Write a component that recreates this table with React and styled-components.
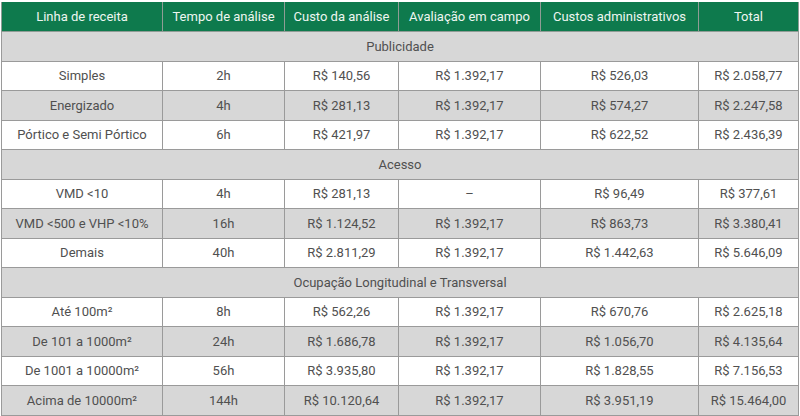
import React from "react";
import styled, { createGlobalStyle } from "styled-components";

const Global = createGlobalStyle`
  html, body { margin: 0; padding: 0; background: #fff; }
  body { font-family: Roboto, "Liberation Sans", sans-serif; }
`;

const Wrap = styled.div`
  padding: 2px 2px 0 1px;
`;

const Table = styled.table`
  border-collapse: collapse;
  table-layout: fixed;
  width: 797px;
  font-size: 13px;
  color: #505050;
`;

const Th = styled.th`
  background: #0e7a4d;
  color: #eef6f1;
  font-weight: 400;
  height: 29px;
  padding: 0;
  border: 1px solid #8f9c95;
  border-top: none;
  text-align: center;
`;

const Td = styled.td`
  height: 28.5px;
  padding: 0;
  text-align: center;
  border: 1px solid #9a9a9a;
  background: ${(p) => (p.$shade ? "#d7d7d7" : "#ffffff")};
`;

const SectionTd = styled.td`
  height: 28.5px;
  padding: 0;
  text-align: center;
  border: 1px solid #9a9a9a;
  background: #d7d7d7;
`;

const cols = [161, 122, 114, 142, 158, 100];
const heads = [
  "Linha de receita",
  "Tempo de análise",
  "Custo da análise",
  "Avaliação em campo",
  "Custos administrativos",
  "Total",
];

const sections = [
  {
    title: "Publicidade",
    rows: [
      ["Simples", "2h", "R$ 140,56", "R$ 1.392,17", "R$ 526,03", "R$ 2.058,77"],
      ["Energizado", "4h", "R$ 281,13", "R$ 1.392,17", "R$ 574,27", "R$ 2.247,58"],
      ["Pórtico e Semi Pórtico", "6h", "R$ 421,97", "R$ 1.392,17", "R$ 622,52", "R$ 2.436,39"],
    ],
  },
  {
    title: "Acesso",
    rows: [
      ["VMD <10", "4h", "R$ 281,13", "–", "R$ 96,49", "R$ 377,61"],
      ["VMD <500 e VHP <10%", "16h", "R$ 1.124,52", "R$ 1.392,17", "R$ 863,73", "R$ 3.380,41"],
      ["Demais", "40h", "R$ 2.811,29", "R$ 1.392,17", "R$ 1.442,63", "R$ 5.646,09"],
    ],
  },
  {
    title: "Ocupação Longitudinal e Transversal",
    rows: [
      ["Até 100m²", "8h", "R$ 562,26", "R$ 1.392,17", "R$ 670,76", "R$ 2.625,18"],
      ["De 101 a 1000m²", "24h", "R$ 1.686,78", "R$ 1.392,17", "R$ 1.056,70", "R$ 4.135,64"],
      ["De 1001 a 10000m²", "56h", "R$ 3.935,80", "R$ 1.392,17", "R$ 1.828,55", "R$ 7.156,53"],
      ["Acima de 10000m²", "144h", "R$ 10.120,64", "R$ 1.392,17", "R$ 3.951,19", "R$ 15.464,00"],
    ],
  },
];

export default function App() {
  return (
    <Wrap>
      <Global />
      <Table>
        <colgroup>
          {cols.map((w, i) => (
            <col key={i} style={{ width: w }} />
          ))}
        </colgroup>
        <thead>
          <tr>
            {heads.map((h) => (
              <Th key={h}>{h}</Th>
            ))}
          </tr>
        </thead>
        <tbody>
          {sections.map((s) => (
            <React.Fragment key={s.title}>
              <tr>
                <SectionTd colSpan={6}>{s.title}</SectionTd>
              </tr>
              {s.rows.map((r, i) => (
                <tr key={r[0]}>
                  {r.map((c, j) => (
                    <Td key={j} $shade={i % 2 === 1}>
                      {c}
                    </Td>
                  ))}
                </tr>
              ))}
            </React.Fragment>
          ))}
        </tbody>
      </Table>
    </Wrap>
  );
}
